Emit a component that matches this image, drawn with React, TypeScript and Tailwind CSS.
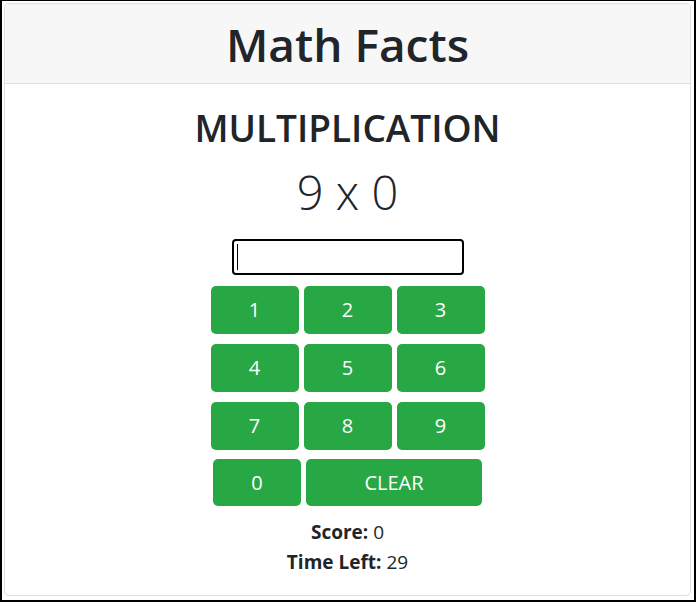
const keys = ["1", "2", "3", "4", "5", "6", "7", "8", "9"];

const App = () => {
  return (
    <div
      className="w-[696px] h-[602px] bg-white border-t border-l-2 border-r-2 border-b-2 border-black pl-[2px] pt-[2px] text-[#212529]"
      style={{ fontFamily: '"Open Sans", "Noto Sans", sans-serif' }}
    >
      <div className="w-[687px] h-[593px] border border-[#dfdfdf] rounded-[5px] overflow-hidden flex flex-col">
        {/* Header */}
        <div className="h-[80px] shrink-0 bg-[#f7f7f7] border-b border-[#dfdfdf] flex items-center justify-center">
          <h1 className="text-[46px] leading-[60px] font-semibold">Math Facts</h1>
        </div>

        {/* Body */}
        <div className="flex flex-col items-center pt-[20px]">
          <h2 className="text-[37px] leading-[48px] font-semibold">MULTIPLICATION</h2>
          <div className="mt-[10px] text-[47px] leading-[60px] font-light">9 x 0</div>

          {/* Answer input */}
          <div className="mt-[17px] w-[232px] h-[36px] border-2 border-black rounded-[4px] flex items-center pl-[3px]">
            <span className="w-px h-[26px] bg-black" />
          </div>

          {/* Keypad */}
          <div className="mt-[11px] grid grid-cols-[88px_88px_88px] gap-x-[5px] gap-y-[10px]">
            {keys.map((k) => (
              <button
                key={k}
                className="h-[48px] bg-[#28a745] text-white text-[20px] rounded-[5px] flex items-center justify-center"
              >
                {k}
              </button>
            ))}
          </div>
          <div className="mt-[9px] flex gap-x-[5px]">
            <button className="w-[88px] h-[47px] bg-[#28a745] text-white text-[20px] rounded-[5px] flex items-center justify-center">
              0
            </button>
            <button className="w-[176px] h-[47px] bg-[#28a745] text-white text-[20px] rounded-[5px] flex items-center justify-center">
              CLEAR
            </button>
          </div>

          {/* Stats */}
          <div className="mt-[11px] text-[19px] leading-[30px] text-center">
            <p>
              <span className="font-bold">Score:</span> 0
            </p>
            <p>
              <span className="font-bold">Time Left:</span> 29
            </p>
          </div>
        </div>
      </div>
    </div>
  );
};

export default App;
